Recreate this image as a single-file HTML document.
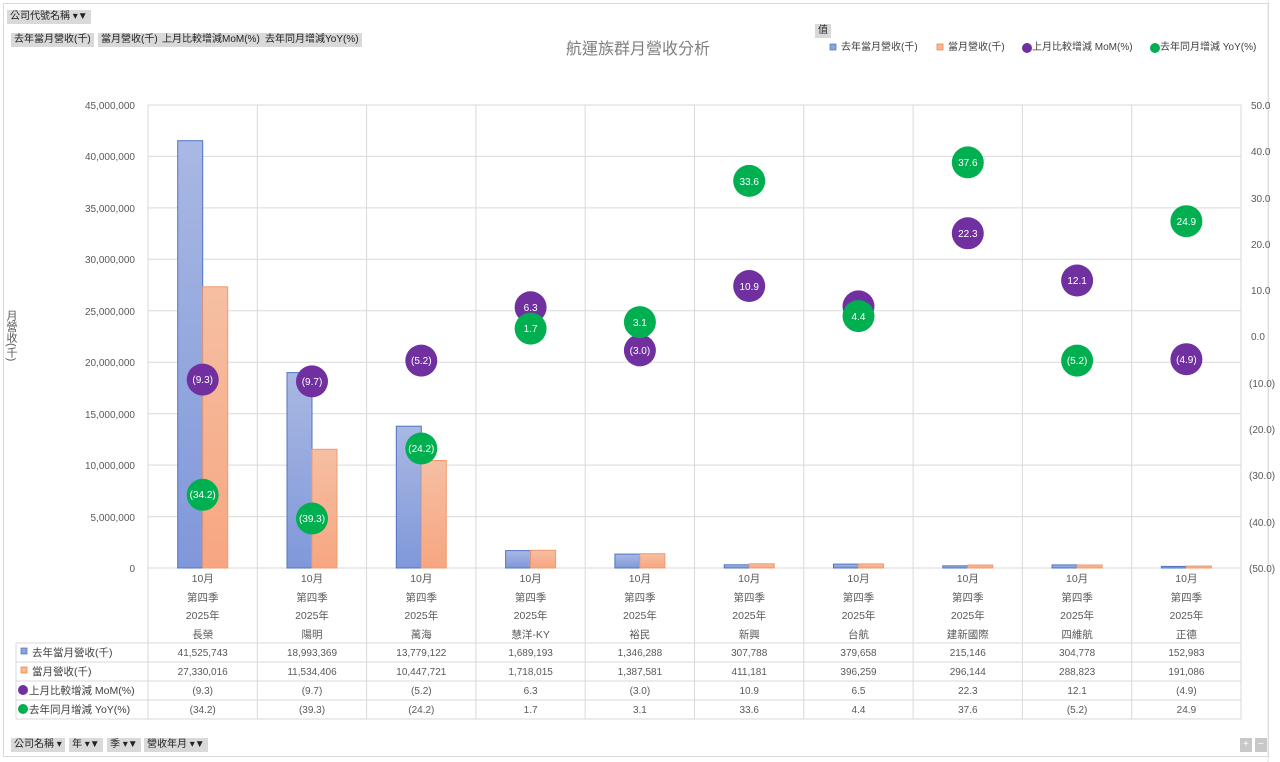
<!DOCTYPE html>
<html><head><meta charset="utf-8"><style>
html,body{margin:0;padding:0;background:#fff;width:1280px;height:762px;overflow:hidden;font-family:"Liberation Sans","Noto Sans CJK TC",sans-serif;}
.btn{position:absolute;background:#d9d9d9;color:#222;font-size:10px;height:14px;line-height:14px;padding:0 3px;white-space:nowrap;font-family:"Liberation Sans","Noto Sans CJK TC",sans-serif;}
.ytitle{position:absolute;left:3px;top:310px;writing-mode:vertical-rl;font-size:11px;color:#595959;}
svg text{font-family:"Liberation Sans","Noto Sans CJK TC",sans-serif;}
</style></head><body>
<svg width="1280" height="762" style="position:absolute;left:0;top:0">
<rect x="3.5" y="3.5" width="1265" height="753" fill="#fff" stroke="#d9d9d9"/>
<line x1="1268" y1="0" x2="1268" y2="762" stroke="#e0e0e0"/>
<text x="638" y="54" text-anchor="middle" font-size="16" fill="#7f7f7f">航運族群月營收分析</text>
<!-- legend -->
<rect x="830" y="44" width="6" height="6" fill="#8fa2dc" stroke="#4472c4" stroke-width="0.7"/>
<text x="841" y="50" font-size="10" fill="#404040">去年當月營收(千)</text>
<rect x="937" y="44" width="6" height="6" fill="#f8b898" stroke="#ed7d31" stroke-width="0.7"/>
<text x="948" y="50" font-size="10" fill="#404040">當月營收(千)</text>
<circle cx="1027" cy="48" r="5" fill="#7030a0"/>
<text x="1032" y="50" font-size="10" fill="#404040">上月比較增減 MoM(%)</text>
<circle cx="1155" cy="48" r="5" fill="#00b050"/>
<text x="1160" y="50" font-size="10" fill="#404040">去年同月增減 YoY(%)</text>
<!-- horizontal grid -->
<g stroke="#d9d9d9" stroke-width="1">
<line x1="148" y1="105" x2="1241" y2="105"/><line x1="148" y1="156.4" x2="1241" y2="156.4"/>
<line x1="148" y1="207.9" x2="1241" y2="207.9"/><line x1="148" y1="259.3" x2="1241" y2="259.3"/>
<line x1="148" y1="310.8" x2="1241" y2="310.8"/><line x1="148" y1="362.2" x2="1241" y2="362.2"/>
<line x1="148" y1="413.7" x2="1241" y2="413.7"/><line x1="148" y1="465.1" x2="1241" y2="465.1"/>
<line x1="148" y1="516.6" x2="1241" y2="516.6"/><line x1="148" y1="568" x2="1241" y2="568"/>
<line x1="148" y1="105" x2="148" y2="719"/><line x1="257.3" y1="105" x2="257.3" y2="719"/>
<line x1="366.6" y1="105" x2="366.6" y2="719"/><line x1="475.9" y1="105" x2="475.9" y2="719"/>
<line x1="585.2" y1="105" x2="585.2" y2="719"/><line x1="694.5" y1="105" x2="694.5" y2="719"/>
<line x1="803.8" y1="105" x2="803.8" y2="719"/><line x1="913.1" y1="105" x2="913.1" y2="719"/>
<line x1="1022.4" y1="105" x2="1022.4" y2="719"/><line x1="1131.7" y1="105" x2="1131.7" y2="719"/>
<line x1="1241" y1="105" x2="1241" y2="719"/>
<line x1="16" y1="643" x2="1241" y2="643"/><line x1="16" y1="662" x2="1241" y2="662"/>
<line x1="16" y1="681" x2="1241" y2="681"/><line x1="16" y1="700" x2="1241" y2="700"/>
<line x1="16" y1="719" x2="1241" y2="719"/><line x1="16" y1="643" x2="16" y2="719"/>
</g>
<!-- left axis -->
<g font-size="10" fill="#595959" text-anchor="end">
<text x="135" y="109">45,000,000</text><text x="135" y="160">40,000,000</text>
<text x="135" y="212">35,000,000</text><text x="135" y="263">30,000,000</text>
<text x="135" y="315">25,000,000</text><text x="135" y="366">20,000,000</text>
<text x="135" y="418">15,000,000</text><text x="135" y="469">10,000,000</text>
<text x="135" y="521">5,000,000</text><text x="135" y="572">0</text>
</g>
<g font-size="10" fill="#595959">
<text x="1251" y="109">50.0</text><text x="1251" y="155">40.0</text>
<text x="1251" y="202">30.0</text><text x="1251" y="248">20.0</text>
<text x="1251" y="294">10.0</text><text x="1251" y="340">0.0</text>
<text x="1249" y="387">(10.0)</text><text x="1249" y="433">(20.0)</text>
<text x="1249" y="479">(30.0)</text><text x="1249" y="526">(40.0)</text>
<text x="1249" y="572">(50.0)</text>
</g>
<defs>
<linearGradient id="gb" x1="0" y1="0" x2="0" y2="1"><stop offset="0" stop-color="#a9b8e3"/><stop offset="1" stop-color="#8098da"/></linearGradient>
<linearGradient id="go" x1="0" y1="0" x2="0" y2="1"><stop offset="0" stop-color="#f6bfa3"/><stop offset="1" stop-color="#f7a680"/></linearGradient>
</defs>
<g fill="url(#gb)" stroke="#4f74c4" stroke-width="1">
<rect x="177.7" y="140.7" width="25" height="427.3"/>
<rect x="287" y="372.6" width="25" height="195.4"/>
<rect x="396.3" y="426.2" width="25" height="141.8"/>
<rect x="505.6" y="550.6" width="25" height="17.4"/>
<rect x="614.9" y="554.1" width="25" height="13.9"/>
<rect x="724.2" y="564.8" width="25" height="3.2"/>
<rect x="833.5" y="564.1" width="25" height="3.9"/>
<rect x="942.8" y="565.8" width="25" height="2.2"/>
<rect x="1052.1" y="564.9" width="25" height="3.1"/>
<rect x="1161.4" y="566.4" width="25" height="1.6"/>
</g>
<g fill="url(#go)" stroke="#f09b70" stroke-width="1">
<rect x="202.7" y="286.8" width="25" height="281.2"/>
<rect x="312" y="449.3" width="25" height="118.7"/>
<rect x="421.3" y="460.5" width="25" height="107.5"/>
<rect x="530.6" y="550.3" width="25" height="17.7"/>
<rect x="639.9" y="553.7" width="25" height="14.3"/>
<rect x="749.2" y="563.8" width="25" height="4.2"/>
<rect x="858.5" y="563.9" width="25" height="4.1"/>
<rect x="967.8" y="565" width="25" height="3"/>
<rect x="1077.1" y="565" width="25" height="3"/>
<rect x="1186.4" y="566" width="25" height="2"/>
</g>
<!-- MoM circles -->
<g fill="#7030a0">
<circle cx="202.7" cy="379.6" r="16"/><circle cx="312" cy="381.4" r="16"/>
<circle cx="421.3" cy="360.6" r="16"/><circle cx="530.6" cy="307.3" r="16"/>
<circle cx="639.9" cy="350.4" r="16"/><circle cx="749.2" cy="286" r="16"/>
<circle cx="858.5" cy="306.4" r="16"/><circle cx="967.8" cy="233.3" r="16"/>
<circle cx="1077.1" cy="280.5" r="16"/><circle cx="1186.4" cy="359.2" r="16"/>
</g>
<g font-size="10" fill="#fff" text-anchor="middle">
<text x="202.7" y="383">(9.3)</text><text x="312" y="385">(9.7)</text>
<text x="421.3" y="364">(5.2)</text><text x="530.6" y="311">6.3</text>
<text x="639.9" y="354">(3.0)</text><text x="749.2" y="290">10.9</text>
<text x="858.5" y="310">6.5</text><text x="967.8" y="237">22.3</text>
<text x="1077.1" y="284">12.1</text><text x="1186.4" y="363">(4.9)</text>
</g>
<g fill="#00b050">
<circle cx="202.7" cy="494.8" r="16"/><circle cx="312" cy="518.5" r="16"/>
<circle cx="421.3" cy="448.5" r="16"/><circle cx="530.6" cy="328.6" r="16"/>
<circle cx="639.9" cy="322.1" r="16"/><circle cx="749.2" cy="180.9" r="16"/>
<circle cx="858.5" cy="316.1" r="16"/><circle cx="967.8" cy="162.4" r="16"/>
<circle cx="1077.1" cy="360.6" r="16"/><circle cx="1186.4" cy="221.2" r="16"/>
</g>
<g font-size="10" fill="#fff" text-anchor="middle">
<text x="202.7" y="498">(34.2)</text><text x="312" y="522">(39.3)</text>
<text x="421.3" y="452">(24.2)</text><text x="530.6" y="332">1.7</text>
<text x="639.9" y="326">3.1</text><text x="749.2" y="185">33.6</text>
<text x="858.5" y="320">4.4</text><text x="967.8" y="166">37.6</text>
<text x="1077.1" y="364">(5.2)</text><text x="1186.4" y="225">24.9</text>
</g>
<!-- category labels -->
<g font-size="10.5" fill="#595959" text-anchor="middle">
<g transform="translate(202.7,0)"><text y="582">10月</text><text y="601">第四季</text><text y="619">2025年</text><text y="638">長榮</text></g>
<g transform="translate(312,0)"><text y="582">10月</text><text y="601">第四季</text><text y="619">2025年</text><text y="638">陽明</text></g>
<g transform="translate(421.3,0)"><text y="582">10月</text><text y="601">第四季</text><text y="619">2025年</text><text y="638">萬海</text></g>
<g transform="translate(530.6,0)"><text y="582">10月</text><text y="601">第四季</text><text y="619">2025年</text><text y="638">慧洋-KY</text></g>
<g transform="translate(639.9,0)"><text y="582">10月</text><text y="601">第四季</text><text y="619">2025年</text><text y="638">裕民</text></g>
<g transform="translate(749.2,0)"><text y="582">10月</text><text y="601">第四季</text><text y="619">2025年</text><text y="638">新興</text></g>
<g transform="translate(858.5,0)"><text y="582">10月</text><text y="601">第四季</text><text y="619">2025年</text><text y="638">台航</text></g>
<g transform="translate(967.8,0)"><text y="582">10月</text><text y="601">第四季</text><text y="619">2025年</text><text y="638">建新國際</text></g>
<g transform="translate(1077.1,0)"><text y="582">10月</text><text y="601">第四季</text><text y="619">2025年</text><text y="638">四維航</text></g>
<g transform="translate(1186.4,0)"><text y="582">10月</text><text y="601">第四季</text><text y="619">2025年</text><text y="638">正德</text></g>
</g>
<!-- table labels -->
<rect x="21" y="648" width="6" height="6" fill="#8fa2dc" stroke="#4472c4" stroke-width="0.7"/>
<text x="32" y="656" font-size="10.5" fill="#404040">去年當月營收(千)</text>
<rect x="21" y="667" width="6" height="6" fill="#f8b898" stroke="#ed7d31" stroke-width="0.7"/>
<text x="32" y="675" font-size="10.5" fill="#404040">當月營收(千)</text>
<circle cx="23" cy="690" r="5" fill="#7030a0"/>
<text x="29" y="694" font-size="10.5" fill="#404040">上月比較增減 MoM(%)</text>
<circle cx="23" cy="709" r="5" fill="#00b050"/>
<text x="29" y="713" font-size="10.5" fill="#404040">去年同月增減 YoY(%)</text>
<g font-size="10" fill="#595959" text-anchor="middle">
<g transform="translate(202.7,0)"><text y="656">41,525,743</text><text y="675">27,330,016</text><text y="694">(9.3)</text><text y="713">(34.2)</text></g>
<g transform="translate(312,0)"><text y="656">18,993,369</text><text y="675">11,534,406</text><text y="694">(9.7)</text><text y="713">(39.3)</text></g>
<g transform="translate(421.3,0)"><text y="656">13,779,122</text><text y="675">10,447,721</text><text y="694">(5.2)</text><text y="713">(24.2)</text></g>
<g transform="translate(530.6,0)"><text y="656">1,689,193</text><text y="675">1,718,015</text><text y="694">6.3</text><text y="713">1.7</text></g>
<g transform="translate(639.9,0)"><text y="656">1,346,288</text><text y="675">1,387,581</text><text y="694">(3.0)</text><text y="713">3.1</text></g>
<g transform="translate(749.2,0)"><text y="656">307,788</text><text y="675">411,181</text><text y="694">10.9</text><text y="713">33.6</text></g>
<g transform="translate(858.5,0)"><text y="656">379,658</text><text y="675">396,259</text><text y="694">6.5</text><text y="713">4.4</text></g>
<g transform="translate(967.8,0)"><text y="656">215,146</text><text y="675">296,144</text><text y="694">22.3</text><text y="713">37.6</text></g>
<g transform="translate(1077.1,0)"><text y="656">304,778</text><text y="675">288,823</text><text y="694">12.1</text><text y="713">(5.2)</text></g>
<g transform="translate(1186.4,0)"><text y="656">152,983</text><text y="675">191,086</text><text y="694">(4.9)</text><text y="713">24.9</text></g>
</g>
</svg>
<div class="ytitle">月營收(千)</div>
<div class="btn" style="left:7px;top:10px;">公司代號名稱 ▾▼</div>
<div class="btn" style="left:11px;top:33px;">去年當月營收(千)</div>
<div class="btn" style="left:98px;top:33px;">當月營收(千)</div>
<div class="btn" style="left:159px;top:33px;">上月比較增減MoM(%)</div>
<div class="btn" style="left:262px;top:33px;">去年同月增減YoY(%)</div>
<div class="btn" style="left:815px;top:24px;">值</div>
<div class="btn" style="left:11px;top:738px;">公司名稱 ▾</div>
<div class="btn" style="left:69px;top:738px;">年 ▾▼</div>
<div class="btn" style="left:107px;top:738px;">季 ▾▼</div>
<div class="btn" style="left:144px;top:738px;">營收年月 ▾▼</div>
<div class="btn" style="left:1240px;top:738px;color:#fff;background:#c8c8c8">+</div>
<div class="btn" style="left:1255px;top:738px;color:#fff;background:#c8c8c8">−</div>
</body></html>
